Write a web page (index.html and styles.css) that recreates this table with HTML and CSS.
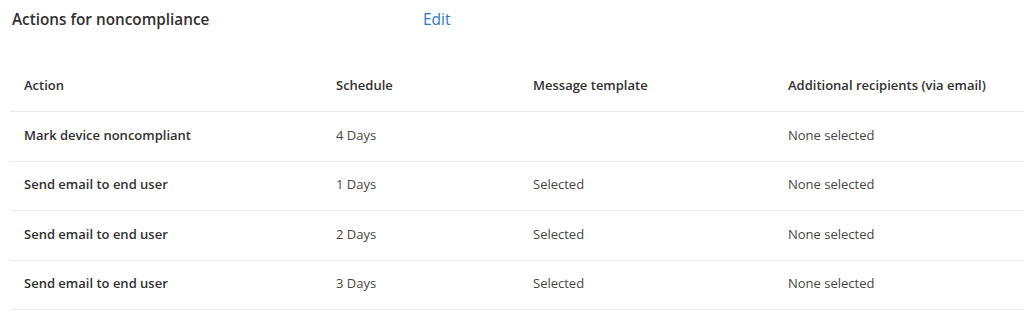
FILE: index.html
```html
<!DOCTYPE html>
<html>
<head>
<meta charset="utf-8">
<link rel="stylesheet" href="styles.css">
</head>
<body>
<div class="page">
  <div class="section-head">
    <h2 class="title">Actions for noncompliance</h2>
    <a class="edit" href="#">Edit</a>
  </div>
  <div class="table">
    <div class="row head">
      <div class="cell">Action</div>
      <div class="cell">Schedule</div>
      <div class="cell">Message template</div>
      <div class="cell">Additional recipients (via email)</div>
    </div>
    <div class="row">
      <div class="cell strong">Mark device noncompliant</div>
      <div class="cell">4 Days</div>
      <div class="cell"></div>
      <div class="cell">None selected</div>
    </div>
    <div class="row">
      <div class="cell strong">Send email to end user</div>
      <div class="cell">1 Days</div>
      <div class="cell">Selected</div>
      <div class="cell">None selected</div>
    </div>
    <div class="row">
      <div class="cell strong">Send email to end user</div>
      <div class="cell">2 Days</div>
      <div class="cell">Selected</div>
      <div class="cell">None selected</div>
    </div>
    <div class="row">
      <div class="cell strong">Send email to end user</div>
      <div class="cell">3 Days</div>
      <div class="cell">Selected</div>
      <div class="cell">None selected</div>
    </div>
  </div>
</div>
</body>
</html>
```
FILE: styles.css
```css
html, body {
  margin: 0;
  padding: 0;
  background: #ffffff;
}
body {
  font-family: "Open Sans", "Noto Sans", sans-serif;
  color: #323130;
}
.page {
  padding: 0 0 0 10px;
}
.section-head {
  display: flex;
  align-items: center;
  height: 38px;
  padding-left: 2px;
}
.title {
  margin: 0;
  width: 411px;
  font-size: 15.3px;
  font-weight: 600;
  color: #323130;
}
.edit {
  font-size: 15.5px;
  color: #2b7bd0;
  text-decoration: none;
}
.table {
  margin-top: 23px;
}
.row {
  display: grid;
  grid-template-columns: 312px 197px 255px 1fr;
  align-items: center;
  height: 48.5px;
  padding-bottom: 3px;
  box-sizing: content-box;
  height: 45.5px;
  border-bottom: 1px solid #edebe9;
  font-size: 13px;
}
.row.head {
  height: 48px;
  padding-bottom: 2px;
}
.cell {
  padding-left: 14px;
  color: #484644;
  white-space: nowrap;
}
.head .cell,
.cell.strong {
  font-weight: 600;
  color: #323130;
}
```
